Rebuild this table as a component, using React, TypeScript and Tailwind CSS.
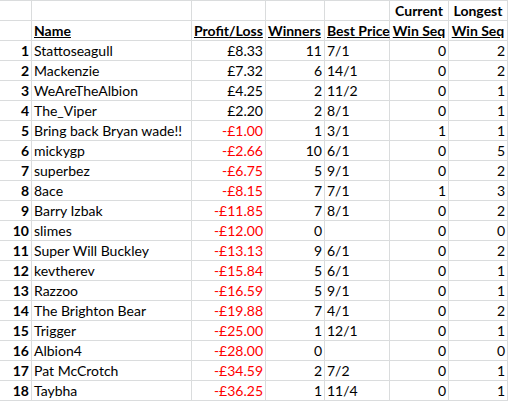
import React from "react";

type Row = [number, string, string, string, string, string, string];

const rows: Row[] = [
  [1, "Stattoseagull", "£8.33", "11", "7/1", "0", "2"],
  [2, "Mackenzie", "£7.32", "6", "14/1", "0", "2"],
  [3, "WeAreTheAlbion", "£4.25", "2", "11/2", "0", "1"],
  [4, "The_Viper", "£2.20", "2", "8/1", "0", "1"],
  [5, "Bring back Bryan wade!!", "-£1.00", "1", "3/1", "1", "1"],
  [6, "mickygp", "-£2.66", "10", "6/1", "0", "5"],
  [7, "superbez", "-£6.75", "5", "9/1", "0", "2"],
  [8, "8ace", "-£8.15", "7", "7/1", "1", "3"],
  [9, "Barry Izbak", "-£11.85", "7", "8/1", "0", "2"],
  [10, "slimes", "-£12.00", "0", "", "0", "0"],
  [11, "Super Will Buckley", "-£13.13", "9", "6/1", "0", "2"],
  [12, "kevtherev", "-£15.84", "5", "6/1", "0", "1"],
  [13, "Razzoo", "-£16.59", "5", "9/1", "0", "1"],
  [14, "The Brighton Bear", "-£19.88", "7", "4/1", "0", "2"],
  [15, "Trigger", "-£25.00", "1", "12/1", "0", "1"],
  [16, "Albion4", "-£28.00", "0", "", "0", "0"],
  [17, "Pat McCrotch", "-£34.59", "2", "7/2", "0", "1"],
  [18, "Taybha", "-£36.25", "1", "11/4", "0", "1"],
];

const cell =
  "h-[20px] border-r border-b border-[#dadcdd] flex items-end pb-[2px] px-[2px] leading-none whitespace-nowrap overflow-visible";

export default function App() {
  return (
    <div
      className="w-[520px] h-[410px] bg-white text-black text-[14px]"
      style={{ fontFamily: "Lato, 'Open Sans', sans-serif" }}
    >
      <div className="grid grid-cols-[32px_160px_74px_59px_65px_59px_59px] w-[508px] border-t border-[#dadcdd]">
        {/* row 0 */}
        <div className={cell}></div>
        <div className={cell}></div>
        <div className={cell}></div>
        <div className={cell}></div>
        <div className={cell}></div>
        <div className={`${cell} justify-center font-bold`}>Current</div>
        <div className={`${cell} justify-center font-bold`}>Longest</div>
        {/* header */}
        <div className={cell}></div>
        <div className={`${cell} font-bold underline`}>Name</div>
        <div className={`${cell} font-bold underline`}>Profit/Loss</div>
        <div className={`${cell} font-bold underline`}>Winners</div>
        <div className={`${cell} font-bold underline`}>Best Price</div>
        <div className={`${cell} justify-center font-bold underline`}>Win Seq</div>
        <div className={`${cell} justify-center font-bold underline`}>Win Seq</div>
        {rows.map((r) => (
          <React.Fragment key={r[0]}>
            <div className={`${cell} justify-end font-bold`}>{r[0]}</div>
            <div className={cell}>{r[1]}</div>
            <div
              className={`${cell} justify-end ${r[2].startsWith("-") ? "text-[#ff0000]" : ""}`}
            >
              {r[2]}
            </div>
            <div className={`${cell} justify-end`}>{r[3]}</div>
            <div className={cell}>{r[4]}</div>
            <div className={`${cell} justify-end`}>{r[5]}</div>
            <div className={`${cell} justify-end`}>{r[6]}</div>
          </React.Fragment>
        ))}
      </div>
    </div>
  );
}
